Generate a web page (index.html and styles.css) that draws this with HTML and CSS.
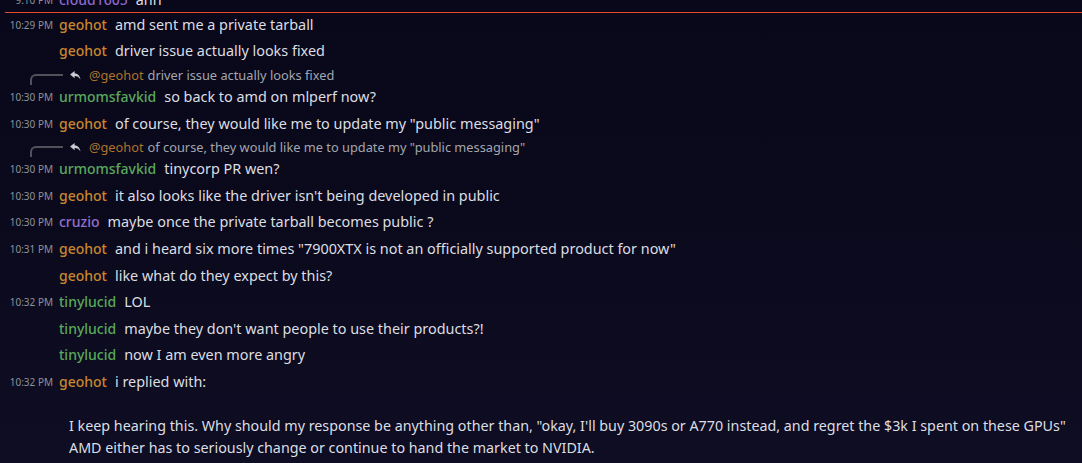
FILE: index.html
```html
<!DOCTYPE html>
<html>
<head>
<meta charset="utf-8">
<link rel="stylesheet" href="styles.css">
</head>
<body>
<div class="chat">
  <div class="row top"><span class="ts">9:10 PM</span><span class="name c-cloud">cloud1605</span><span class="msg">ahh</span></div>
  <div class="divider"></div>
  <div class="row"><span class="ts">10:29 PM</span><span class="name c-geo">geohot</span><span class="msg">amd sent me a private tarball</span></div>
  <div class="row"><span class="ts"></span><span class="name c-geo">geohot</span><span class="msg">driver issue actually looks fixed</span></div>
  <div class="reply"><span class="spine"></span><svg class="rarrow" viewBox="0 0 12 10" width="11" height="9"><path d="M5 0 L0 4 L5 8 L5 5.5 C8 5.5 10 6.5 11.5 9.5 C11 6 9 3 5 2.6 Z" fill="#c9ccd2"/></svg><span class="rname c-geo">@geohot</span><span class="rtext">driver issue actually looks fixed</span></div>
  <div class="row"><span class="ts">10:30 PM</span><span class="name c-green">urmomsfavkid</span><span class="msg">so back to amd on mlperf now?</span></div>
  <div class="row"><span class="ts">10:30 PM</span><span class="name c-geo">geohot</span><span class="msg">of course, they would like me to update my "public messaging"</span></div>
  <div class="reply"><span class="spine"></span><svg class="rarrow" viewBox="0 0 12 10" width="11" height="9"><path d="M5 0 L0 4 L5 8 L5 5.5 C8 5.5 10 6.5 11.5 9.5 C11 6 9 3 5 2.6 Z" fill="#c9ccd2"/></svg><span class="rname c-geo">@geohot</span><span class="rtext">of course, they would like me to update my "public messaging"</span></div>
  <div class="row"><span class="ts">10:30 PM</span><span class="name c-green">urmomsfavkid</span><span class="msg">tinycorp PR wen?</span></div>
  <div class="row"><span class="ts">10:30 PM</span><span class="name c-geo">geohot</span><span class="msg">it also looks like the driver isn't being developed in public</span></div>
  <div class="row"><span class="ts">10:30 PM</span><span class="name c-purple">cruzio</span><span class="msg">maybe once the private tarball becomes public ?</span></div>
  <div class="row"><span class="ts">10:31 PM</span><span class="name c-geo">geohot</span><span class="msg">and i heard six more times "7900XTX is not an officially supported product for now"</span></div>
  <div class="row"><span class="ts"></span><span class="name c-geo">geohot</span><span class="msg">like what do they expect by this?</span></div>
  <div class="row"><span class="ts">10:32 PM</span><span class="name c-green">tinylucid</span><span class="msg">LOL</span></div>
  <div class="row"><span class="ts"></span><span class="name c-green">tinylucid</span><span class="msg">maybe they don't want people to use their products?!</span></div>
  <div class="row"><span class="ts"></span><span class="name c-green">tinylucid</span><span class="msg">now I am even more angry</span></div>
  <div class="row"><span class="ts">10:32 PM</span><span class="name c-geo">geohot</span><span class="msg">i replied with:</span></div>
  <div class="para">
    <p>I keep hearing this. Why should my response be anything other than, "okay, I'll buy 3090s or A770 instead, and regret the $3k I spent on these GPUs"</p>
    <p>AMD either has to seriously change or continue to hand the market to NVIDIA.</p>
  </div>
</div>
</body>
</html>
```

FILE: styles.css
```css
html, body {
  margin: 0;
  padding: 0;
  height: 100%;
  overflow: hidden;
}
body {
  background: linear-gradient(180deg, #09071a 0%, #0b0a1d 50%, #0e0d23 100%);
  font-family: "Noto Sans", "Open Sans", sans-serif;
  color: #dcdee2;
}
.chat {
  margin-top: -14px;
  display: flex;
  flex-direction: column;
}
.row {
  display: flex;
  align-items: center;
  height: 26.6px;
  white-space: nowrap;
}
.row.top {
  height: 26px;
}
.ts {
  width: 53px;
  flex: none;
  text-align: right;
  font-size: 10px;
  color: #8e929b;
  margin-right: 6px;
  padding-top: 1px;
}
.name {
  font-size: 14px;
  font-weight: 500;
  margin-right: 8px;
}
.msg {
  font-size: 14.4px;
  color: #dcdee2;
}
.c-geo { color: #c8862f; }
.c-green { color: #5aa85a; }
.c-purple { color: #9670cc; }
.c-cloud { color: #8a6acc; }
.divider {
  height: 1px;
  background: #e8482c;
  margin-left: 5px;
  margin-bottom: -2px;
}
.reply {
  display: flex;
  align-items: center;
  height: 19px;
  padding-left: 30px;
  white-space: nowrap;
  padding-top: 3px;
  box-sizing: border-box;
}
.spine {
  width: 33px;
  height: 11px;
  border-left: 2px solid #4f525a;
  border-top: 2px solid #4f525a;
  border-top-left-radius: 6px;
  box-sizing: border-box;
  align-self: flex-start;
  margin-top: 7px;
  margin-right: 7px;
}
.rarrow {
  margin-right: 8px;
}
.rname {
  font-size: 12.8px;
  opacity: 0.85;
  margin-right: 4px;
}
.rtext {
  font-size: 12.8px;
  color: #a3a6ad;
}
.para {
  padding-left: 69px;
  margin-top: 20px;
  font-size: 14.3px;
  line-height: 22px;
  color: #dcdee2;
}
.para p {
  margin: 0;
  white-space: nowrap;
}
```
